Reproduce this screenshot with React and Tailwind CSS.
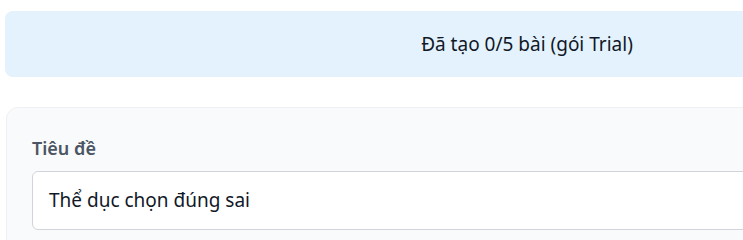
export default function App() {
  return (
    <div className="min-h-screen bg-white px-[5px] pt-[11px]" style={{ fontFamily: '"Noto Sans", "Open Sans", sans-serif' }}>
      {/* Quota banner */}
      <div className="w-[1044px] h-[66px] rounded-lg bg-[#e3f2fd] flex items-center justify-center text-[19px] text-[#111827]">
        Đã tạo 0/5 bài (gói Trial)
      </div>

      {/* Form card */}
      <div className="mt-[30px] ml-px w-[1040px] rounded-xl border border-[#eef0f3] bg-[#f9fafb] px-[25px] pt-[26px] pb-6">
        <label className="block text-[18px] font-semibold text-[#4b5563] leading-7 mb-[9px]">Tiêu đề</label>
        <div className="h-[59px] rounded-md border border-[#d1d5db] bg-white flex items-center pl-[16px] text-[19px] text-[#111827]">
          Thể dục chọn đúng sai
        </div>
      </div>
    </div>
  );
}
